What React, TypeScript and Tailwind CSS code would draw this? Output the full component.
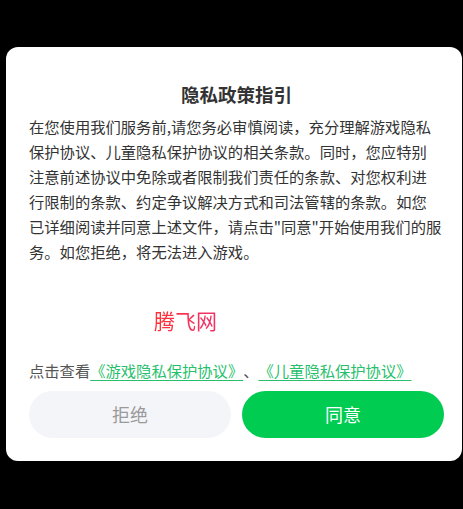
const cjk = { fontFamily: '"Noto Sans CJK SC", "Noto Sans", sans-serif' };

const lines = [
  '在您使用我们服务前,请您务必审慎阅读，充分理解游戏隐私',
  '保护协议、儿童隐私保护协议的相关条款。同时，您应特别',
  '注意前述协议中免除或者限制我们责任的条款、对您权利进',
  '行限制的条款、约定争议解决方式和司法管辖的条款。如您',
  '已详细阅读并同意上述文件，请点击"同意"开始使用我们的服',
  '务。如您拒绝，将无法进入游戏。'
];

export default function App() {
  return (
    <div className="min-h-screen bg-black pt-[47px] pl-[6px] [text-spacing-trim:space-all]" style={cjk}>
      <div className="w-[456px] rounded-[12px] bg-white pt-[34px] pr-[18px] pb-[23px] pl-[23px]">
        <h1 className="text-center text-[18.5px] leading-[26px] font-bold text-[#333]">隐私政策指引</h1>

        <p className="mt-[6.5px] text-[15.3px] leading-[25px] text-[#333]">
          {lines.map(l => (
            <span key={l} className="block whitespace-nowrap">
              {l}
            </span>
          ))}
        </p>

        {/* watermark */}
        <div className="mt-[42px] ml-[125px] w-fit bg-gradient-to-r from-[#ff3030] to-[#f2306a] bg-clip-text text-[21px] leading-[28px] text-transparent">
          腾飞网
        </div>

        <p className="mt-[24.5px] text-[15.3px] leading-[25px] whitespace-nowrap text-[#555]">
          点击查看
          <a className="text-[#27bf6c] underline underline-offset-[3px]">《游戏隐私保护协议》</a>
          、
          <a className="text-[#27bf6c] underline underline-offset-[3px]">《儿童隐私保护协议》 </a>
        </p>

        <div className="mt-[8px] flex gap-[11px]">
          <button className="h-[47px] flex-1 rounded-full bg-[#f4f5f9] text-[18px] text-[#9a9a9a]">拒绝</button>
          <button className="h-[47px] flex-1 rounded-full bg-[#00cc52] text-[18px] text-white">同意</button>
        </div>
      </div>
    </div>
  );
}
